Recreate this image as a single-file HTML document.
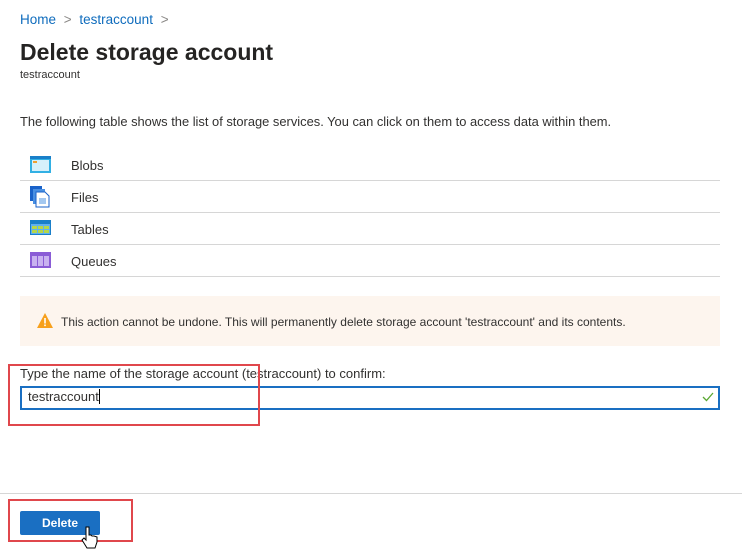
<!DOCTYPE html>
<html><head><meta charset="utf-8">
<style>
*{margin:0;padding:0;box-sizing:border-box}
body{width:742px;height:559px;background:#fff;font-family:"Liberation Sans",sans-serif;color:#323130;position:relative;overflow:hidden}
.a{position:absolute;white-space:nowrap}
.line{position:absolute;left:20px;width:700px;height:1px;background:#d6d6d6}
.row{font-size:13px;left:71px}
</style></head><body>
<div class="a" style="left:20px;top:12px;font-size:13.5px;color:#0f6cbd">Home <span style="color:#8a8886;margin:0 4px">&gt;</span> testraccount <span style="color:#8a8886;margin-left:4px">&gt;</span></div>
<div class="a" style="left:20px;top:39px;font-size:23px;font-weight:600;color:#252423">Delete storage account</div>
<div class="a" style="left:20px;top:69px;font-size:11px">testraccount</div>
<div class="a" style="left:20px;top:114px;font-size:12.9px">The following table shows the list of storage services. You can click on them to access data within them.</div>

<svg class="a" style="left:30px;top:156px" width="21" height="17"><rect x="0" y="0" width="21" height="17" fill="#32b0e4"/><rect x="0" y="0" width="21" height="3" fill="#1a7fc9"/><rect x="2" y="4" width="17" height="11" fill="#d6f0fb"/><rect x="3" y="5" width="4" height="2" fill="#f0a030"/></svg>
<div class="a row" style="top:158px">Blobs</div>
<div class="line" style="top:180px"></div>
<svg class="a" style="left:30px;top:186px" width="21" height="22"><rect x="0" y="0" width="12" height="15" fill="#1a62c9"/><rect x="3" y="3" width="12" height="15" fill="#4a90e2"/><path d="M6 6h9l4 4v11H6z" fill="#fff" stroke="#1a62c9"/><path d="M9 13h7M9 15h7M9 17h7" stroke="#4a90e2"/></svg>
<div class="a row" style="top:190px">Files</div>
<div class="line" style="top:212px"></div>
<svg class="a" style="left:30px;top:220px" width="21" height="15"><rect width="21" height="15" fill="#1a7fc9"/><rect x="1" y="4" width="19" height="10" fill="#5fb0f0"/><rect x="2" y="6" width="5" height="3" fill="#b6d74a"/><rect x="8" y="6" width="5" height="3" fill="#b6d74a"/><rect x="14" y="6" width="5" height="3" fill="#b6d74a"/><rect x="2" y="10" width="5" height="3" fill="#b6d74a"/><rect x="8" y="10" width="5" height="3" fill="#b6d74a"/><rect x="14" y="10" width="5" height="3" fill="#b6d74a"/></svg>
<div class="a row" style="top:222px">Tables</div>
<div class="line" style="top:244px"></div>
<svg class="a" style="left:30px;top:252px" width="21" height="16"><rect width="21" height="16" fill="#8a5cd6"/><rect x="2" y="4" width="5" height="10" fill="#c9b2f0"/><rect x="8" y="4" width="5" height="10" fill="#c9b2f0"/><rect x="14" y="4" width="5" height="10" fill="#c9b2f0"/></svg>
<div class="a row" style="top:254px">Queues</div>
<div class="line" style="top:276px"></div>

<div class="a" style="left:20px;top:296px;width:700px;height:50px;background:#fdf5ee"></div>
<svg class="a" style="left:37px;top:313px" width="16" height="15"><path d="M8 0L16 15H0z" fill="#f7a01c"/><rect x="7.2" y="5" width="1.6" height="5.5" fill="#fff"/><rect x="7.2" y="11.5" width="1.6" height="1.6" fill="#fff"/></svg>
<div class="a" style="left:61px;top:315px;font-size:12px">This action cannot be undone. This will permanently delete storage account 'testraccount' and its contents.</div>

<div class="a" style="left:20px;top:366px;font-size:13px">Type the name of the storage account (testraccount) to confirm:</div>
<div class="a" style="left:20px;top:386px;width:700px;height:24px;border:2px solid #1a6fc2;background:#fff"></div>
<div class="a" style="left:28px;top:389px;font-size:13px">testraccount<span style="display:inline-block;width:1px;height:15px;background:#000;vertical-align:-3px"></span></div>
<svg class="a" style="left:702px;top:392px" width="12" height="10"><path d="M1 5l3.5 3.5L11 1" fill="none" stroke="#5aa832" stroke-width="1.3"/></svg>
<div class="a" style="left:8px;top:364px;width:252px;height:62px;border:2px solid #e0474c"></div>

<div class="a" style="left:0;top:493px;width:742px;height:1px;background:#d6d6d6"></div>
<div class="a" style="left:20px;top:511px;width:80px;height:24px;background:#1a6fc2;border-radius:2px;color:#fff;font-weight:bold;font-size:12px;text-align:center;line-height:24px">Delete</div>
<div class="a" style="left:8px;top:499px;width:125px;height:43px;border:2px solid #e0474c"></div>
<svg class="a" style="left:81px;top:526px" width="20" height="28"><path d="M5 1v13l-2-2-2 2 5 8h8l2-6v-5l-3-1-2 0-1-1-2 0V1z" fill="#fff" stroke="#000" stroke-width="1"/></svg>
</body></html>
